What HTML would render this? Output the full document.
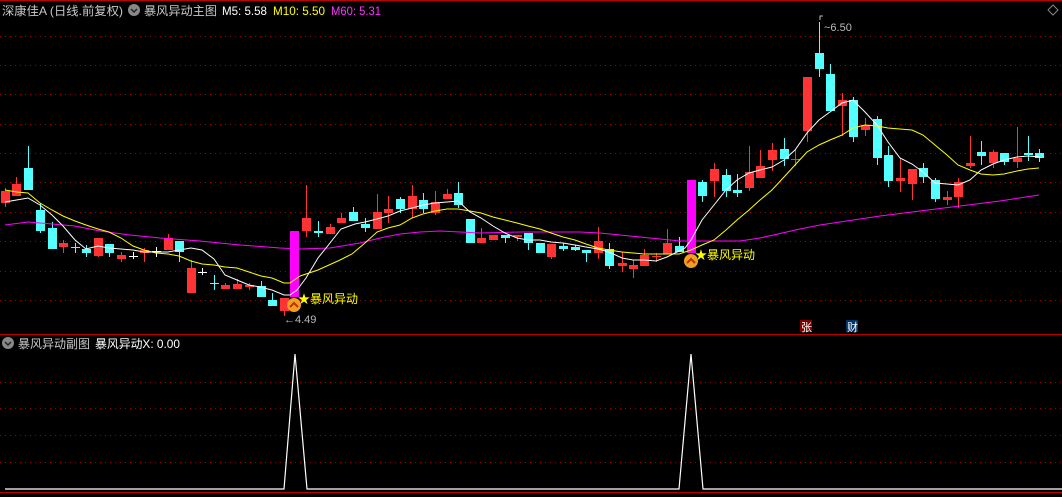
<!DOCTYPE html>
<html><head><meta charset="utf-8"><style>
html,body{margin:0;padding:0;background:#000;width:1062px;height:497px;overflow:hidden}
svg{display:block}
text{font-family:"Liberation Sans","Noto Sans CJK SC",sans-serif}
</style></head><body>
<svg id="s" width="1062" height="497" xmlns="http://www.w3.org/2000/svg">
<rect width="1062" height="497" fill="#000"/>
<line x1="0" y1="0.5" x2="1062" y2="0.5" stroke="#c00000"/>
<line x1="0" y1="334.5" x2="1062" y2="334.5" stroke="#c00000"/>
<line x1="0" y1="492.5" x2="1062" y2="492.5" stroke="#c00000"/>
<g id="grid" stroke="#a00000" stroke-dasharray="1,4"></g>
<g id="c"></g>
<polyline id="m60" fill="none" stroke="#ff00ff" stroke-width="1"/>
<polyline id="m10" fill="none" stroke="#ffff00" stroke-width="1"/>
<polyline id="m5" fill="none" stroke="#ffffff" stroke-width="1"/>
<polyline fill="none" stroke="#fff" stroke-width="1.2" points="5,489 284,489 295,354 307,489 679,489 691,354 703,489 1062,489"/>
<!-- header -->
<text x="2" y="15" font-size="12" fill="#c8c8c8" textLength="121" lengthAdjust="spacingAndGlyphs">深康佳A (日线.前复权)</text>
<circle cx="134" cy="10" r="6" fill="#888"/><path d="M131 9 l3 3 l3 -3" stroke="#222" stroke-width="1.5" fill="none"/>
<text x="144" y="15" font-size="12" fill="#c8c8c8" textLength="73" lengthAdjust="spacingAndGlyphs">暴风异动主图</text>
<text x="222" y="15" font-size="12" fill="#fff" textLength="45" lengthAdjust="spacingAndGlyphs">M5: 5.58</text>
<text x="273" y="15" font-size="12" fill="#ffff00" textLength="52" lengthAdjust="spacingAndGlyphs">M10: 5.50</text>
<text x="331" y="15" font-size="12" fill="#ff33ff" textLength="50" lengthAdjust="spacingAndGlyphs">M60: 5.31</text>
<path d="M1053 5 l5 5 l-5 5 l-5 -5z" stroke="#888" fill="none"/>
<!-- sub header -->
<circle cx="8" cy="343" r="6" fill="#888"/><path d="M5 342 l3 3 l3 -3" stroke="#222" stroke-width="1.5" fill="none"/>
<text x="18" y="348" font-size="12" fill="#c8c8c8" textLength="72" lengthAdjust="spacingAndGlyphs">暴风异动副图</text>
<text x="95" y="348" font-size="12" fill="#fff" textLength="85" lengthAdjust="spacingAndGlyphs">暴风异动X: 0.00</text>
<!-- markers -->
<text x="298" y="303" font-size="12" fill="#ffff00">★暴风异动</text>
<text x="695" y="259" font-size="12" fill="#ffff00">★暴风异动</text>
<g id="ic1"></g>
<text x="284" y="323" font-size="11" fill="#bbb">←4.49</text>
<path d="M820 20 v-4 h3" stroke="#bbb" fill="none"/>
<text x="824" y="31" font-size="11" fill="#bbb">~6.50</text>
<rect x="800" y="320" width="12" height="12" fill="#800000"/><text x="801" y="331" font-size="11" fill="#fff">张</text>
<rect x="846" y="320" width="12" height="12" fill="#003366"/><text x="847" y="331" font-size="11" fill="#fff">财</text>
</svg>
<script>
var NS="http://www.w3.org/2000/svg";
function el(p,t,a){var e=document.createElementNS(NS,t);for(var k in a)e.setAttribute(k,a[k]);p.appendChild(e);return e;}
var g=document.getElementById("grid");
[36,65,94,124,153,182,212,241,271,300,382,408,435,462].forEach(function(y){el(g,"line",{x1:0,y1:y+.5,x2:1062,y2:y+.5});});
var C={r:"#ff3333",c:"#54ffff",w:"#ffffff",p:"#ff00ff"};
var d=[[5,191,203,188,207,"r"],[16,184,196,177,196,"r"],[28,168,190,146,190,"c"],[40,210,231,203,233,"c"],[52,228,249,222,249,"c"],[63,243,247,240,253,"r"],[75,247,248,243,253,"c"],[86,249,253,245,257,"c"],[98,238,256,238,257,"r"],[109,244,253,244,257,"c"],[121,255,259,252,262,"r"],[133,256,257,252,259,"w"],[144,250,253,248,262,"r"],[156,251,252,247,257,"w"],[168,238,250,234,250,"r"],[179,241,252,241,262,"c"],[191,268,293,260,293,"r"],[202,272,273,268,275,"w"],[214,283,284,275,290,"c"],[225,285,289,283,289,"r"],[237,284,289,279,289,"r"],[249,285,287,283,290,"r"],[261,286,297,281,297,"c"],[272,300,306,293,306,"c"],[284,298,311,298,316,"r"],[294,231,297,231,297,"p"],[306,218,231,185,237,"r"],[318,231,233,221,237,"c"],[330,227,234,224,234,"r"],[341,218,223,213,223,"r"],[353,212,221,207,221,"c"],[365,224,228,218,232,"c"],[377,212,229,194,229,"r"],[388,209,213,196,223,"r"],[400,199,209,197,213,"c"],[412,196,209,185,218,"r"],[423,200,209,193,213,"c"],[435,202,213,191,215,"r"],[447,194,199,189,199,"r"],[458,193,205,182,208,"c"],[470,219,243,219,243,"c"],[481,238,243,228,243,"r"],[493,235,240,235,240,"r"],[505,235,238,235,243,"c"],[517,235,237,235,241,"r"],[528,233,243,233,250,"c"],[540,243,253,243,253,"c"],[551,244,257,244,259,"r"],[563,246,249,243,251,"c"],[575,247,250,245,251,"c"],[586,250,253,250,262,"c"],[598,241,253,227,259,"r"],[609,249,266,243,269,"c"],[622,263,266,252,272,"r"],[633,265,269,260,278,"r"],[644,255,266,249,266,"r"],[656,256,257,253,262,"r"],[667,243,254,229,254,"r"],[679,246,252,237,252,"c"],[691,180,253,180,253,"p"],[702,182,196,180,202,"c"],[714,169,181,163,197,"r"],[726,175,191,169,197,"c"],[737,190,193,174,197,"c"],[749,172,188,146,191,"r"],[760,166,178,150,178,"r"],[772,150,160,143,171,"r"],[784,149,159,138,166,"c"],[795,159,160,150,166,"r"],[807,77,131,77,142,"r"],[819,53,69,22,77,"c"],[830,74,111,64,111,"c"],[842,100,106,93,136,"r"],[853,100,137,97,142,"c"],[865,125,130,118,136,"r"],[877,119,158,116,165,"c"],[888,155,181,146,187,"c"],[900,178,181,158,192,"r"],[912,169,184,169,200,"r"],[923,168,177,163,183,"c"],[935,180,199,178,202,"c"],[947,197,200,191,205,"r"],[958,182,197,178,208,"r"],[970,163,166,136,168,"r"],[981,152,156,141,165,"c"],[993,152,163,150,168,"r"],[1004,153,162,153,165,"c"],[1017,158,162,127,168,"r"],[1028,153,155,136,161,"c"],[1039,153,158,149,162,"c"]];
var cg=document.getElementById("c");
d.forEach(function(a){var x=a[0],col=C[a[5]];
 el(cg,"line",{x1:x+.5,y1:a[3],x2:x+.5,y2:a[4],stroke:col});
 el(cg,"rect",{x:x-4,y:a[1],width:9,height:Math.max(1,a[2]-a[1]),fill:col});});
function P(id,s){document.getElementById(id).setAttribute("points",s);}
P("m5","5,202 28,198 40,205 52,215 63,226 75,240 86,249 98,246 109,248 121,249 133,250 144,252 168,252 179,250 191,248 202,250 214,259 225,275 237,280 249,285 260,287 272,290 284,295 290,295 297,290 306,278 318,258 330,243 341,229 355,224 365,222 377,219 388,216 400,211 412,208 423,205 435,203 447,202 458,201 470,212 481,218 493,226 505,233 517,238 528,240 540,240 551,242 563,243 575,245 586,247 598,249 609,252 622,258 633,260 644,260 656,261 667,257 679,251 685,248 691,240 702,220 714,205 726,190 737,180 749,173 760,170 772,167 784,160 795,150 807,133 819,120 830,112 842,103 853,100 865,112 877,125 888,142 900,158 912,164 923,172 935,183 947,184 958,185 970,180 981,170 993,164 1004,160 1017,157 1028,156 1040,157");
P("m10","5,190 17,192 28,193 40,203 52,210 63,216 75,221 86,225 98,229 109,232 121,238 133,246 144,250 156,253 168,254 179,256 191,261 202,264 214,265 225,267 237,268 249,272 261,276 272,278 284,283 290,283 300,276 318,270 340,260 352,254 365,243 377,232 388,228 400,225 412,218 423,214 435,211 447,209 458,209 470,211 481,213 493,217 505,220 517,223 528,226 540,229 551,233 563,237 575,240 586,244 598,248 609,250 622,252 633,253 644,254 679,254 691,250 702,245 714,240 726,230 737,220 749,210 760,200 772,190 784,177 795,165 807,152 819,145 830,140 842,135 853,128 865,125 877,126 888,128 912,130 923,135 935,145 947,155 958,165 970,170 981,174 993,175 1004,174 1017,171 1028,169 1039,168");
P("m60","5,225 28,222 52,224 75,226 100,231 130,235 160,238 200,241 240,245 280,248 300,249 330,248 360,243 380,238 400,234 420,232 440,231 480,233 520,232 580,232 600,233 620,235 640,237 660,239 680,241 700,241 740,241 760,238 800,229 820,225 840,222 880,216 920,211 960,206 1000,201 1039,195");
var ic=document.getElementById("ic1");
[[294,305],[691,261]].forEach(function(p){
 el(ic,"circle",{cx:p[0],cy:p[1],r:7,fill:"#f0a020"});
 el(ic,"path",{d:"M"+(p[0]-4)+" "+(p[1]+2)+" l4 -4 l4 4",stroke:"#c03000","stroke-width":2,fill:"none"});});
</script>
</body></html>
